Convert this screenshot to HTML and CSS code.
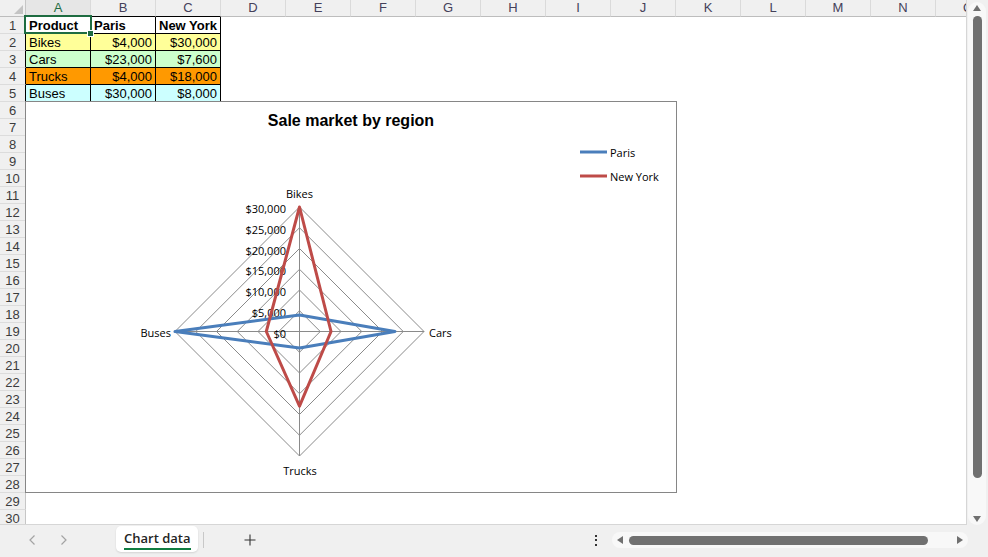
FILE: index.html
```html
<!DOCTYPE html>
<html lang="en">
<head>
<meta charset="utf-8">
<title>Chart data</title>
<link rel="stylesheet" href="styles.css">
</head>
<body>
<div class="app">
  <div class="main">
    <div class="sheet">
      <div class="colhead">
        <div class="corner"><span class="corner-tri"></span></div>
        <div class="ch sel tb">A</div>
        <div class="ch tb">B</div>
        <div class="ch tb">C</div>
        <div class="ch">D</div>
        <div class="ch">E</div>
        <div class="ch">F</div>
        <div class="ch">G</div>
        <div class="ch">H</div>
        <div class="ch">I</div>
        <div class="ch">J</div>
        <div class="ch">K</div>
        <div class="ch">L</div>
        <div class="ch">M</div>
        <div class="ch">N</div>
        <div class="ch">O</div>
      </div>
      <div class="body">
        <div class="rowheads">
          <div class="rh edge">1</div>
          <div class="rh edge">2</div>
          <div class="rh edge">3</div>
          <div class="rh edge">4</div>
          <div class="rh edge">5</div>
          <div class="rh">6</div>
          <div class="rh">7</div>
          <div class="rh">8</div>
          <div class="rh">9</div>
          <div class="rh">10</div>
          <div class="rh">11</div>
          <div class="rh">12</div>
          <div class="rh">13</div>
          <div class="rh">14</div>
          <div class="rh">15</div>
          <div class="rh">16</div>
          <div class="rh">17</div>
          <div class="rh">18</div>
          <div class="rh">19</div>
          <div class="rh">20</div>
          <div class="rh">21</div>
          <div class="rh">22</div>
          <div class="rh">23</div>
          <div class="rh">24</div>
          <div class="rh">25</div>
          <div class="rh">26</div>
          <div class="rh">27</div>
          <div class="rh">28</div>
          <div class="rh">29</div>
          <div class="rh">30</div>
        </div>
        <div class="cells">
          <div class="table">
            <div class="c b">Product</div>
            <div class="c b">Paris</div>
            <div class="c b">New York</div>

            <div class="c y">Bikes</div>
            <div class="c y n">$4,000</div>
            <div class="c y n">$30,000</div>

            <div class="c g">Cars</div>
            <div class="c g n">$23,000</div>
            <div class="c g n">$7,600</div>

            <div class="c o">Trucks</div>
            <div class="c o n">$4,000</div>
            <div class="c o n">$18,000</div>

            <div class="c cy">Buses</div>
            <div class="c cy n">$30,000</div>
            <div class="c cy n">$8,000</div>
          </div>
          <div class="selection"><span class="handle"></span></div>
          <div class="chart">
            <svg width="650" height="390" viewBox="0 0 650 390">
              <text class="chart-title" x="325" y="24" text-anchor="middle">Sale market by region</text>
              <g class="grid">
                <polygon points="273.5,208.75 294.25,229.5 273.5,250.25 252.75,229.5"/>
                <polygon points="273.5,188 315,229.5 273.5,271 232,229.5"/>
                <polygon points="273.5,167.25 335.75,229.5 273.5,291.75 211.25,229.5"/>
                <polygon points="273.5,146.5 356.5,229.5 273.5,312.5 190.5,229.5"/>
                <polygon points="273.5,125.75 377.25,229.5 273.5,333.25 169.75,229.5"/>
                <polygon points="273.5,105 398,229.5 273.5,354 149,229.5"/>
                <line x1="273.5" y1="105" x2="273.5" y2="354"/>
                <line x1="149" y1="229.5" x2="398" y2="229.5"/>
              </g>
              <g class="lbl vals" text-anchor="end">
                <text x="260" y="231">$0</text>
                <text x="260" y="210.25">$5,000</text>
                <text x="260" y="189.5">$10,000</text>
                <text x="260" y="168.75">$15,000</text>
                <text x="260" y="148">$20,000</text>
                <text x="260" y="127.25">$25,000</text>
                <text x="260" y="106.5">$30,000</text>
              </g>
              <g class="lbl">
                <text x="273.5" y="91.5" text-anchor="middle">Bikes</text>
                <text x="403" y="230.5">Cars</text>
                <text x="274" y="368" text-anchor="middle">Trucks</text>
                <text x="145" y="230.5" text-anchor="end">Buses</text>
              </g>
              <polygon class="series paris" points="273.5,212.9 368.95,229.5 273.5,246.1 149,229.5"/>
              <polygon class="series ny" points="273.5,105 305.04,229.5 273.5,304.2 240.3,229.5"/>
              <line class="series paris" x1="554" y1="50" x2="581" y2="50"/>
              <line class="series ny" x1="554" y1="74" x2="581" y2="74"/>
              <g class="lbl">
                <text x="584" y="50">Paris</text>
                <text x="584" y="74">New York</text>
              </g>
            </svg>
          </div>
        </div>
      </div>
    </div>
    <div class="vscroll">
      <div class="vtrack">
        <span class="arrow-up"></span>
        <div class="vthumb"></div>
        <span class="arrow-down"></span>
      </div>
    </div>
  </div>
  <div class="footer">
    <div class="nav">
      <span class="navbtn"><svg width="8" height="12" viewBox="0 0 8 12"><path d="M6.5 1.5 L2 6 L6.5 10.5" fill="none" stroke="#a3a3a3" stroke-width="1.2"/></svg></span>
      <span class="navbtn"><svg width="8" height="12" viewBox="0 0 8 12"><path d="M1.5 1.5 L6 6 L1.5 10.5" fill="none" stroke="#a3a3a3" stroke-width="1.2"/></svg></span>
    </div>
    <div class="tab"><span class="tab-label">Chart data</span></div>
    <div class="tab-sep"></div>
    <div class="add"><svg width="12" height="12" viewBox="0 0 12 12"><path d="M6 0.5 V11.5 M0.5 6 H11.5" stroke="#333" stroke-width="1.1" fill="none"/></svg></div>
    <div class="spacer"></div>
    <div class="dots"><i></i><i></i><i></i></div>
    <div class="hscroll">
      <span class="arrow-left"></span>
      <div class="hthumb"></div>
      <span class="arrow-right"></span>
    </div>
  </div>
</div>
</body>
</html>
```
FILE: styles.css
```css
html, body {
  margin: 0;
  padding: 0;
  background: #ffffff;
  font-family: "Liberation Sans", Arial, sans-serif;
}

.app {
  width: 988px;
  height: 557px;
  display: flex;
  flex-direction: column;
  background: #f0f0f0;
  overflow: hidden;
}

.main {
  display: flex;
  height: 525px;
  flex: none;
}

/* ---------- sheet ---------- */
.sheet {
  width: 967px;
  height: 525px;
  flex: none;
  box-sizing: border-box;
  border-right: 1px solid #d6d6d6;
  border-bottom: 1px solid #d6d6d6;
  background: #ffffff;
  overflow: hidden;
  display: flex;
  flex-direction: column;
}

.colhead {
  display: flex;
  height: 17px;
  flex: none;
}

.corner {
  width: 26px;
  flex: none;
  box-sizing: border-box;
  border-right: 1px solid #c6c6c6;
  border-bottom: 1px solid #bdbdbd;
  background: #f0f0f0;
  display: flex;
  align-items: flex-end;
  justify-content: flex-end;
  padding: 0 2px 2px 0;
}

.corner-tri {
  width: 0;
  height: 0;
  border-left: 9px solid transparent;
  border-bottom: 9px solid #c4c4c4;
}

.ch {
  width: 65px;
  flex: none;
  box-sizing: border-box;
  border-right: 1px solid #dadada;
  border-bottom: 1px solid #bdbdbd;
  background: #f0f0f0;
  color: #44405a;
  font-size: 13px;
  line-height: 16px;
  text-align: center;
  overflow: hidden;
}

.ch.tb {
  border-bottom-color: #000000;
}

.ch.sel {
  color: #1e6c41;
  background: #e6e6e6;
}

.body {
  display: flex;
  flex: 1;
  min-height: 0;
}

.rowheads {
  width: 26px;
  flex: none;
  display: flex;
  flex-direction: column;
}

.rh {
  height: 17px;
  flex: none;
  box-sizing: border-box;
  border-right: 1px solid #c6c6c6;
  border-bottom: 1px solid #dcdcdc;
  background: #f0f0f0;
  color: #3c3c3c;
  font-size: 13px;
  line-height: 17px;
  text-align: center;
  overflow: hidden;
}

.rh.edge {
  border-right-color: #000000;
}

.cells {
  position: relative;
  flex: 1;
}

.table {
  display: grid;
  grid-template-columns: repeat(3, 65px);
  grid-auto-rows: 17px;
  width: 195px;
}

.c {
  box-sizing: border-box;
  border-right: 1px solid #000000;
  border-bottom: 1px solid #000000;
  font-size: 13px;
  line-height: 17px;
  padding: 0 3px;
  white-space: nowrap;
  overflow: hidden;
  color: #000000;
}

.c.b { font-weight: bold; }
.c.n { text-align: right; }
.y { background: #ffff99; }
.g { background: #ccffcc; }
.o { background: #ff9900; }
.cy { background: #ccffff; }

.selection {
  position: absolute;
  left: -2px;
  top: -2px;
  width: 68px;
  height: 19px;
  box-sizing: border-box;
  border: 2px solid #1e6c41;
}

.handle {
  position: absolute;
  left: 62px;
  top: 14px;
  width: 5px;
  height: 5px;
  background: #1e6c41;
  box-shadow: 0 0 0 1px #ffffff;
}

/* ---------- chart ---------- */
.chart {
  position: absolute;
  left: -1px;
  top: 84px;
  width: 652px;
  height: 392px;
  box-sizing: border-box;
  border: 1px solid #868686;
  background: #ffffff;
}

.chart svg {
  display: block;
}

.chart-title {
  font-family: "Liberation Sans", Arial, sans-serif;
  font-weight: bold;
  font-size: 16px;
  fill: #000000;
}

.grid polygon,
.grid line {
  fill: none;
  stroke: #8a8a8a;
  stroke-width: 1;
}

.lbl text {
  font-family: "Open Sans", "Noto Sans", sans-serif;
  font-size: 11px;
  fill: #000000;
  dominant-baseline: central;
}

.series {
  fill: none;
  stroke-width: 3;
  stroke-linejoin: round;
}

.series.paris { stroke: #4a7ebb; }
.series.ny { stroke: #be4b48; }

/* ---------- vertical scrollbar ---------- */
.vscroll {
  width: 21px;
  flex: none;
  background: #f0f0f0;
}

.vtrack {
  margin: 2px 0 0 1px;
  width: 18px;
  height: 523px;
  border-radius: 9px;
  background: #f8f8f8;
  display: flex;
  flex-direction: column;
  align-items: center;
}

.arrow-up {
  margin-top: 3px;
  width: 0;
  height: 0;
  border-left: 4.5px solid transparent;
  border-right: 4.5px solid transparent;
  border-bottom: 6px solid #707070;
}

.vthumb {
  margin-top: 5px;
  width: 9px;
  height: 462px;
  border-radius: 5px;
  background: #707070;
}

.arrow-down {
  margin-top: 38px;
  width: 0;
  height: 0;
  border-left: 4.5px solid transparent;
  border-right: 4.5px solid transparent;
  border-top: 6px solid #707070;
}

/* ---------- footer ---------- */
.footer {
  height: 32px;
  flex: none;
  display: flex;
  align-items: center;
  padding-bottom: 2px;
  box-sizing: border-box;
  background: #f0f0f0;
}

.nav {
  display: flex;
  padding-left: 24px;
  gap: 16px;
  width: 72px;
  box-sizing: border-box;
  flex: none;
}

.navbtn {
  width: 16px;
  height: 12px;
  display: flex;
  justify-content: center;
}

.tab {
  align-self: flex-start;
  margin-top: 1px;
  margin-left: 44px;
  width: 82px;
  height: 26px;
  flex: none;
  box-sizing: border-box;
  background: #ffffff;
  border-radius: 5px;
  box-shadow: 0 1px 2px rgba(0, 0, 0, 0.12);
  padding: 3px 0 0 8px;
}

.tab-label {
  display: inline-block;
  font-family: "Open Sans", "Noto Sans", sans-serif;
  font-weight: 600;
  font-size: 13px;
  line-height: 16px;
  color: #242424;
  padding-bottom: 2px;
  border-bottom: 2px solid #107c41;
  white-space: nowrap;
}

.tab-sep {
  width: 1px;
  height: 16px;
  background: #c8c8c8;
  margin-left: 5px;
  flex: none;
}

.add {
  margin-left: 31px;
  width: 30px;
  flex: none;
  display: flex;
  justify-content: center;
}

.add svg {
  display: block;
}

.spacer {
  flex: 1;
}

.dots {
  width: 10px;
  margin-right: 11px;
  flex: none;
  display: flex;
  flex-direction: column;
  align-items: center;
  gap: 2.5px;
}

.dots i {
  display: block;
  width: 2px;
  height: 2px;
  background: #333333;
}

.hscroll {
  width: 356px;
  height: 16px;
  margin-right: 20px;
  flex: none;
  box-sizing: border-box;
  border-radius: 8px;
  background: #f8f8f8;
  display: flex;
  align-items: center;
  padding-left: 5px;
}

.arrow-left {
  width: 0;
  height: 0;
  border-top: 4px solid transparent;
  border-bottom: 4px solid transparent;
  border-right: 6px solid #707070;
}

.hthumb {
  margin-left: 6px;
  width: 299px;
  height: 9px;
  border-radius: 5px;
  background: #707070;
}

.arrow-right {
  margin-left: 29px;
  width: 0;
  height: 0;
  border-top: 4px solid transparent;
  border-bottom: 4px solid transparent;
  border-left: 6px solid #707070;
}
```
